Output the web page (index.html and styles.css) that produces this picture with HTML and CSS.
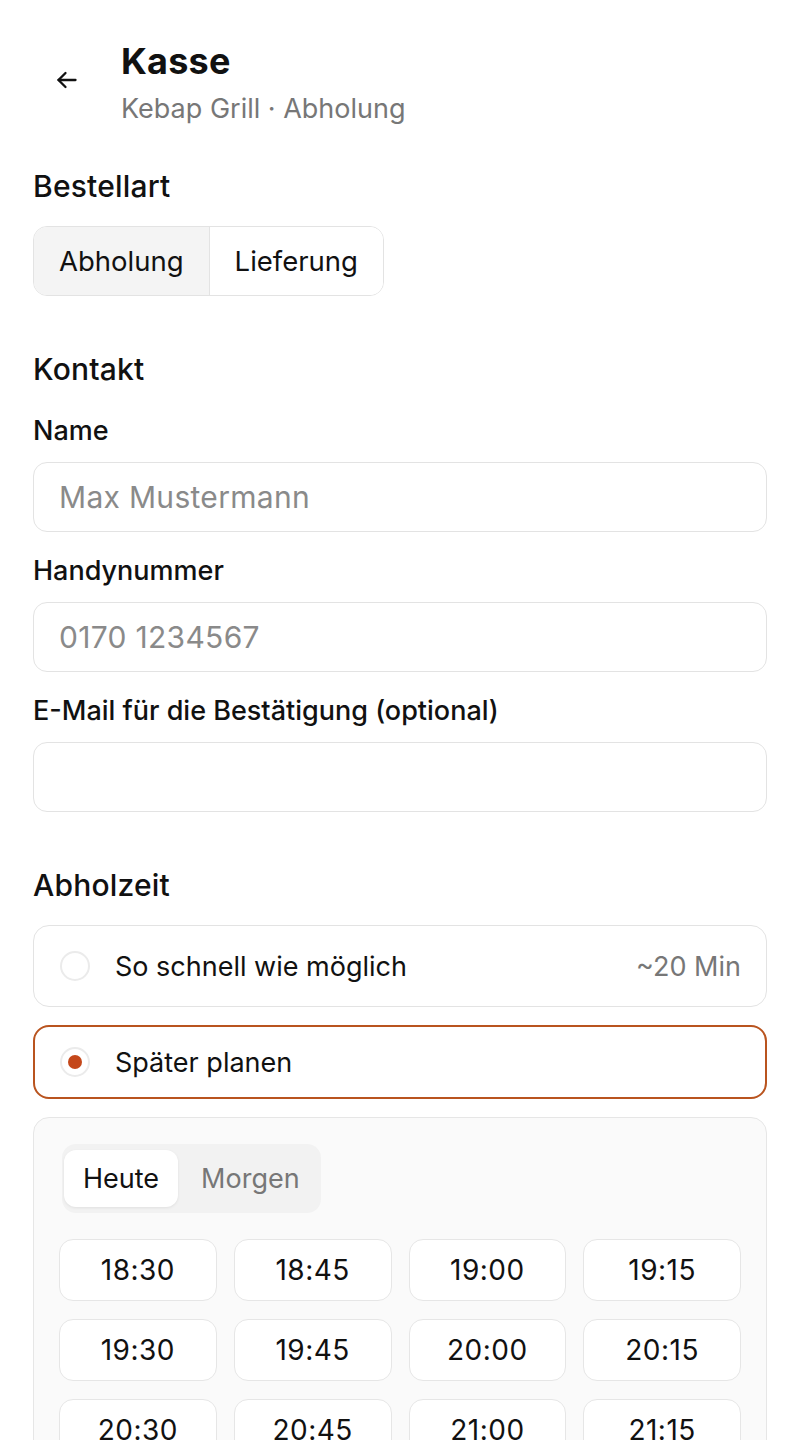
FILE: index.html
```html
<!DOCTYPE html>
<html lang="de">
<head>
    <meta charset="UTF-8" />
    <meta name="viewport" content="width=device-width, initial-scale=1.0"/>
    <title>Kasse</title>
    <link rel="stylesheet" href="styles.css">
</head>
<body>
    <div class="page">
        <header class="top-bar">
            <button type="button" class="back-button" aria-label="Zurück">
                <svg width="24" height="24" viewBox="0 0 24 24" fill="none" stroke="#111" stroke-width="2.3" stroke-linecap="round" stroke-linejoin="round">
                    <path d="M20.5 12H3.5"/>
                    <path d="M10.5 5l-7 7 7 7"/>
                </svg>
            </button>
            <div class="title-block">
                <h1 class="page-title">Kasse</h1>
                <p class="page-subtitle">Kebap Grill · Abholung</p>
            </div>
        </header>

        <section class="section">
            <h2 class="section-title">Bestellart</h2>
            <div class="segmented">
                <button type="button" class="segment active">Abholung</button>
                <button type="button" class="segment">Lieferung</button>
            </div>
        </section>

        <section class="section section-contact">
            <h2 class="section-title">Kontakt</h2>
            <label class="field-label" for="name">Name</label>
            <input class="text-input" type="text" id="name" placeholder="Max Mustermann">
            <label class="field-label" for="phone">Handynummer</label>
            <input class="text-input" type="tel" id="phone" placeholder="0170 1234567">
            <label class="field-label" for="email">E-Mail für die Bestätigung (optional)</label>
            <input class="text-input" type="email" id="email">
        </section>

        <section class="section section-time">
            <h2 class="section-title">Abholzeit</h2>
            <div class="option option-asap">
                <span class="radio"></span>
                <span class="option-label">So schnell wie möglich</span>
                <span class="option-meta">~20 Min</span>
            </div>
            <div class="option selected">
                <span class="radio"></span>
                <span class="option-label">Später planen</span>
            </div>

            <div class="schedule-panel">
                <div class="day-tabs">
                    <button type="button" class="day-tab active">Heute</button>
                    <button type="button" class="day-tab">Morgen</button>
                </div>
                <div class="time-grid">
                    <button type="button" class="time-slot">18:30</button>
                    <button type="button" class="time-slot">18:45</button>
                    <button type="button" class="time-slot">19:00</button>
                    <button type="button" class="time-slot">19:15</button>
                    <button type="button" class="time-slot">19:30</button>
                    <button type="button" class="time-slot">19:45</button>
                    <button type="button" class="time-slot">20:00</button>
                    <button type="button" class="time-slot">20:15</button>
                    <button type="button" class="time-slot">20:30</button>
                    <button type="button" class="time-slot">20:45</button>
                    <button type="button" class="time-slot">21:00</button>
                    <button type="button" class="time-slot">21:15</button>
                </div>
            </div>
        </section>
    </div>
</body>
</html>
```

FILE: styles.css
```css
body {
    font-family: Inter, "Liberation Sans", Arial, sans-serif;
    background-color: #fff;
    color: #111;
    margin: 0;
}

button,
input {
    font-family: inherit;
}

.page {
    padding: 0 33px;
}

/* header */
.top-bar {
    display: flex;
    align-items: flex-start;
    padding-top: 39px;
}

.back-button {
    background: none;
    border: none;
    padding: 0;
    width: 24px;
    height: 24px;
    margin: 29px 0 0 22px;
    cursor: pointer;
}

.title-block {
    margin-left: 42px;
}

.page-title {
    font-size: 36px;
    font-weight: 700;
    line-height: 44px;
    margin: 0;
    letter-spacing: 0.2px;
}

.page-subtitle {
    font-size: 27px;
    line-height: 34px;
    color: #777;
    margin: 9px 0 0;
}

/* sections */
.section {
    margin-top: 42px;
}

.section-contact,
.section-time {
    margin-top: 55px;
}

.section-title {
    font-size: 30px;
    font-weight: 500;
    line-height: 36px;
    margin: 0 0 22px;
    letter-spacing: 0.2px;
}

.segmented {
    display: inline-flex;
    border: 1px solid #e3e3e3;
    border-radius: 14px;
    overflow: hidden;
}

.segment {
    background: #fff;
    border: none;
    font-size: 27.5px;
    color: #111;
    height: 68px;
    padding: 0 25px;
    cursor: pointer;
}

.segment.active {
    background: #f4f4f4;
    border-right: 1px solid #e3e3e3;
}

.section-contact .section-title {
    margin-bottom: 28px;
}

.field-label {
    display: block;
    font-size: 27px;
    font-weight: 500;
    line-height: 32px;
    margin-bottom: 15px;
}

.text-input {
    display: block;
    width: 100%;
    box-sizing: border-box;
    height: 70px;
    padding: 0 25px;
    border: 1px solid #e3e3e3;
    border-radius: 14px;
    font-size: 30px;
    letter-spacing: 0.3px;
    color: #111;
    margin-bottom: 23px;
    outline: none;
}

.text-input::placeholder {
    color: #8a8a8a;
}

.text-input:last-child {
    margin-bottom: 0;
}

/* pickup time */
.option {
    display: flex;
    align-items: center;
    height: 82px;
    box-sizing: border-box;
    padding: 0 25px;
    border: 1px solid #e3e3e3;
    border-radius: 16px;
    margin-bottom: 18px;
}

.option.selected {
    height: 74px;
    border: 2px solid #b9541f;
    padding: 0 24px;
}

.radio {
    width: 30px;
    height: 30px;
    box-sizing: border-box;
    border: 2px solid #ebebeb;
    border-radius: 50%;
    margin-left: 1px;
    display: flex;
    align-items: center;
    justify-content: center;
}

.option.selected .radio::after {
    content: "";
    width: 14px;
    height: 14px;
    border-radius: 50%;
    background: #c4471a;
}

.option-label {
    font-size: 27px;
    margin-left: 25px;
    flex: 1;
}

.option-meta {
    font-size: 27px;
    color: #777;
}

.schedule-panel {
    background: #fafafa;
    border: 1px solid #e6e6e6;
    border-radius: 16px;
    padding: 26px 25px 40px;
}

.day-tabs {
    display: inline-flex;
    background: #f2f2f2;
    border-radius: 14px;
    padding: 6px 2px;
    gap: 4px;
    margin-left: 3px;
}

.day-tab {
    background: none;
    border: none;
    font-size: 27px;
    color: #777;
    height: 57px;
    padding: 0 19px;
    border-radius: 12px;
    cursor: pointer;
}

.day-tab.active {
    background: #fff;
    color: #111;
    box-shadow: 0 1px 3px rgba(0, 0, 0, .08);
}

.time-grid {
    display: grid;
    grid-template-columns: repeat(4, 1fr);
    column-gap: 17px;
    row-gap: 18px;
    margin-top: 26px;
}

.time-slot {
    background: #fff;
    border: 1px solid #e6e6e6;
    border-radius: 14px;
    height: 62px;
    font-size: 28px;
    letter-spacing: 0.5px;
    color: #111;
    cursor: pointer;
}
```
